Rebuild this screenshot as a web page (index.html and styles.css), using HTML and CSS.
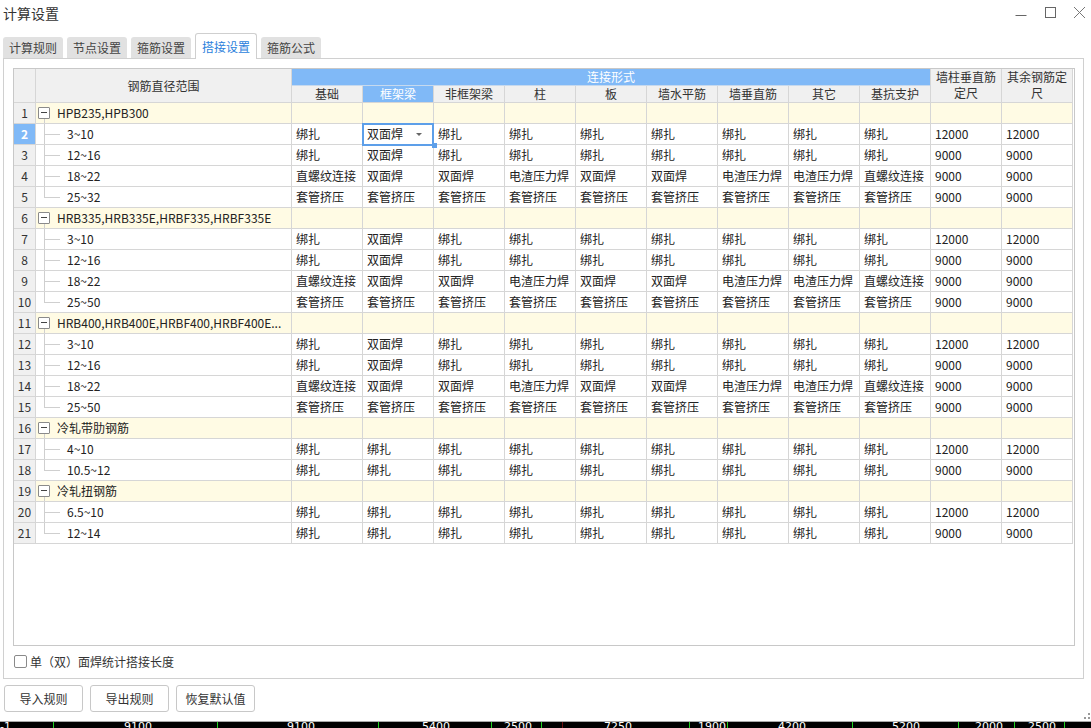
FILE: index.html
```html
<!DOCTYPE html>
<html lang="zh-CN">
<head>
<meta charset="utf-8">
<title>计算设置</title>
<link rel="stylesheet" href="styles.css">
</head>
<body>
<div class="window">
  <div class="titlebar">
    <div class="title">计算设置</div>
    <div class="controls">
      <svg class="ctl" width="12" height="12" viewBox="0 0 12 12"><line x1="0.5" y1="9.5" x2="11.5" y2="9.5" stroke="#666" stroke-width="1"/></svg>
      <svg class="ctl" width="12" height="12" viewBox="0 0 12 12"><rect x="1.5" y="1.5" width="10" height="10" fill="none" stroke="#666" stroke-width="1"/></svg>
      <svg class="ctl" width="12" height="12" viewBox="0 0 12 12"><path d="M1 1 L12 12 M12 1 L1 12" stroke="#777" stroke-width="1" fill="none"/></svg>
    </div>
  </div>

  <div class="tabs">
    <div class="tab">计算规则</div>
    <div class="tab">节点设置</div>
    <div class="tab">箍筋设置</div>
    <div class="tab active">搭接设置</div>
    <div class="tab">箍筋公式</div>
  </div>

  <div class="panel">
    <div class="gridbox">
      <div class="grid">
        <div class="h hn"></div>
        <div class="h hname">钢筋直径范围</div>
        <div class="h hblue">连接形式</div>
        <div class="h hw">墙柱垂直筋定尺</div>
        <div class="h hw">其余钢筋定尺</div>
        <div class="h">基础</div>
        <div class="h hsel">框架梁</div>
        <div class="h">非框架梁</div>
        <div class="h">柱</div>
        <div class="h">板</div>
        <div class="h">墙水平筋</div>
        <div class="h">墙垂直筋</div>
        <div class="h">其它</div>
        <div class="h">基抗支护</div>

        <!-- group 1 -->
        <div class="r g"><div class="n">1</div><div class="nm"><span class="box"></span>HPB235,HPB300</div><div></div><div></div><div></div><div></div><div></div><div></div><div></div><div></div><div></div><div></div><div></div></div>
        <div class="r"><div class="n sel">2</div><div class="nm ch">3~10</div><div class="c">绑扎</div><div class="c selc">双面焊<span class="dd"></span></div><div class="c">绑扎</div><div class="c">绑扎</div><div class="c">绑扎</div><div class="c">绑扎</div><div class="c">绑扎</div><div class="c">绑扎</div><div class="c">绑扎</div><div class="c">12000</div><div class="c">12000</div></div>
        <div class="r"><div class="n">3</div><div class="nm ch">12~16</div><div class="c">绑扎</div><div class="c">双面焊</div><div class="c">绑扎</div><div class="c">绑扎</div><div class="c">绑扎</div><div class="c">绑扎</div><div class="c">绑扎</div><div class="c">绑扎</div><div class="c">绑扎</div><div class="c">9000</div><div class="c">9000</div></div>
        <div class="r"><div class="n">4</div><div class="nm ch">18~22</div><div class="c">直螺纹连接</div><div class="c">双面焊</div><div class="c">双面焊</div><div class="c">电渣压力焊</div><div class="c">双面焊</div><div class="c">双面焊</div><div class="c">电渣压力焊</div><div class="c">电渣压力焊</div><div class="c">直螺纹连接</div><div class="c">9000</div><div class="c">9000</div></div>
        <div class="r"><div class="n">5</div><div class="nm ch last">25~32</div><div class="c">套管挤压</div><div class="c">套管挤压</div><div class="c">套管挤压</div><div class="c">套管挤压</div><div class="c">套管挤压</div><div class="c">套管挤压</div><div class="c">套管挤压</div><div class="c">套管挤压</div><div class="c">套管挤压</div><div class="c">9000</div><div class="c">9000</div></div>

        <!-- group 2 -->
        <div class="r g"><div class="n">6</div><div class="nm"><span class="box"></span>HRB335,HRB335E,HRBF335,HRBF335E</div><div></div><div></div><div></div><div></div><div></div><div></div><div></div><div></div><div></div><div></div><div></div></div>
        <div class="r"><div class="n">7</div><div class="nm ch">3~10</div><div class="c">绑扎</div><div class="c">双面焊</div><div class="c">绑扎</div><div class="c">绑扎</div><div class="c">绑扎</div><div class="c">绑扎</div><div class="c">绑扎</div><div class="c">绑扎</div><div class="c">绑扎</div><div class="c">12000</div><div class="c">12000</div></div>
        <div class="r"><div class="n">8</div><div class="nm ch">12~16</div><div class="c">绑扎</div><div class="c">双面焊</div><div class="c">绑扎</div><div class="c">绑扎</div><div class="c">绑扎</div><div class="c">绑扎</div><div class="c">绑扎</div><div class="c">绑扎</div><div class="c">绑扎</div><div class="c">9000</div><div class="c">9000</div></div>
        <div class="r"><div class="n">9</div><div class="nm ch">18~22</div><div class="c">直螺纹连接</div><div class="c">双面焊</div><div class="c">双面焊</div><div class="c">电渣压力焊</div><div class="c">双面焊</div><div class="c">双面焊</div><div class="c">电渣压力焊</div><div class="c">电渣压力焊</div><div class="c">直螺纹连接</div><div class="c">9000</div><div class="c">9000</div></div>
        <div class="r"><div class="n">10</div><div class="nm ch last">25~50</div><div class="c">套管挤压</div><div class="c">套管挤压</div><div class="c">套管挤压</div><div class="c">套管挤压</div><div class="c">套管挤压</div><div class="c">套管挤压</div><div class="c">套管挤压</div><div class="c">套管挤压</div><div class="c">套管挤压</div><div class="c">9000</div><div class="c">9000</div></div>

        <!-- group 3 -->
        <div class="r g"><div class="n">11</div><div class="nm"><span class="box"></span>HRB400,HRB400E,HRBF400,HRBF400E...</div><div></div><div></div><div></div><div></div><div></div><div></div><div></div><div></div><div></div><div></div><div></div></div>
        <div class="r"><div class="n">12</div><div class="nm ch">3~10</div><div class="c">绑扎</div><div class="c">双面焊</div><div class="c">绑扎</div><div class="c">绑扎</div><div class="c">绑扎</div><div class="c">绑扎</div><div class="c">绑扎</div><div class="c">绑扎</div><div class="c">绑扎</div><div class="c">12000</div><div class="c">12000</div></div>
        <div class="r"><div class="n">13</div><div class="nm ch">12~16</div><div class="c">绑扎</div><div class="c">双面焊</div><div class="c">绑扎</div><div class="c">绑扎</div><div class="c">绑扎</div><div class="c">绑扎</div><div class="c">绑扎</div><div class="c">绑扎</div><div class="c">绑扎</div><div class="c">9000</div><div class="c">9000</div></div>
        <div class="r"><div class="n">14</div><div class="nm ch">18~22</div><div class="c">直螺纹连接</div><div class="c">双面焊</div><div class="c">双面焊</div><div class="c">电渣压力焊</div><div class="c">双面焊</div><div class="c">双面焊</div><div class="c">电渣压力焊</div><div class="c">电渣压力焊</div><div class="c">直螺纹连接</div><div class="c">9000</div><div class="c">9000</div></div>
        <div class="r"><div class="n">15</div><div class="nm ch last">25~50</div><div class="c">套管挤压</div><div class="c">套管挤压</div><div class="c">套管挤压</div><div class="c">套管挤压</div><div class="c">套管挤压</div><div class="c">套管挤压</div><div class="c">套管挤压</div><div class="c">套管挤压</div><div class="c">套管挤压</div><div class="c">9000</div><div class="c">9000</div></div>

        <!-- group 4 -->
        <div class="r g"><div class="n">16</div><div class="nm"><span class="box"></span>冷轧带肋钢筋</div><div></div><div></div><div></div><div></div><div></div><div></div><div></div><div></div><div></div><div></div><div></div></div>
        <div class="r"><div class="n">17</div><div class="nm ch">4~10</div><div class="c">绑扎</div><div class="c">绑扎</div><div class="c">绑扎</div><div class="c">绑扎</div><div class="c">绑扎</div><div class="c">绑扎</div><div class="c">绑扎</div><div class="c">绑扎</div><div class="c">绑扎</div><div class="c">12000</div><div class="c">12000</div></div>
        <div class="r"><div class="n">18</div><div class="nm ch last">10.5~12</div><div class="c">绑扎</div><div class="c">绑扎</div><div class="c">绑扎</div><div class="c">绑扎</div><div class="c">绑扎</div><div class="c">绑扎</div><div class="c">绑扎</div><div class="c">绑扎</div><div class="c">绑扎</div><div class="c">9000</div><div class="c">9000</div></div>

        <!-- group 5 -->
        <div class="r g"><div class="n">19</div><div class="nm"><span class="box"></span>冷轧扭钢筋</div><div></div><div></div><div></div><div></div><div></div><div></div><div></div><div></div><div></div><div></div><div></div></div>
        <div class="r"><div class="n">20</div><div class="nm ch">6.5~10</div><div class="c">绑扎</div><div class="c">绑扎</div><div class="c">绑扎</div><div class="c">绑扎</div><div class="c">绑扎</div><div class="c">绑扎</div><div class="c">绑扎</div><div class="c">绑扎</div><div class="c">绑扎</div><div class="c">12000</div><div class="c">12000</div></div>
        <div class="r"><div class="n">21</div><div class="nm ch last">12~14</div><div class="c">绑扎</div><div class="c">绑扎</div><div class="c">绑扎</div><div class="c">绑扎</div><div class="c">绑扎</div><div class="c">绑扎</div><div class="c">绑扎</div><div class="c">绑扎</div><div class="c">绑扎</div><div class="c">9000</div><div class="c">9000</div></div>
      </div>
    </div>

    <label class="check"><span class="cbox"></span>单（双）面焊统计搭接长度</label>
  </div>

  <div class="buttons">
    <div class="btn">导入规则</div>
    <div class="btn">导出规则</div>
    <div class="btn">恢复默认值</div>
  </div>

  <div class="spacer"></div>

  <div class="ruler">
    <span class="lbl l0">-1</span>
    <span class="tick" style="left:53px"></span>
    <span class="lbl" style="left:124px">9100</span>
    <span class="tick" style="left:217px"></span>
    <span class="lbl" style="left:287px">9100</span>
    <span class="tick" style="left:378px"></span>
    <span class="lbl" style="left:422px">5400</span>
    <span class="tick" style="left:491px"></span>
    <span class="lbl" style="left:504px">2500</span>
    <span class="tick" style="left:541px"></span>
    <span class="tick red" style="left:562px"></span>
    <span class="lbl" style="left:604px">7250</span>
    <span class="tick" style="left:689px"></span>
    <span class="lbl" style="left:698px">1900</span>
    <span class="tick" style="left:727px"></span>
    <span class="lbl" style="left:778px">4200</span>
    <span class="tick" style="left:852px"></span>
    <span class="lbl" style="left:892px">5200</span>
    <span class="tick" style="left:958px"></span>
    <span class="lbl" style="left:975px">2000</span>
    <span class="tick" style="left:1014px"></span>
    <span class="lbl" style="left:1028px">2500</span>
    <span class="tick" style="left:1064px"></span>
  </div>

  <svg class="grip" width="6" height="6" viewBox="0 0 6 6"><rect x="4" y="0" width="2" height="2" fill="#999"/><rect x="0" y="4" width="2" height="2" fill="#999"/><rect x="4" y="4" width="2" height="2" fill="#999"/></svg>
</div>
</body>
</html>
```

FILE: styles.css
```css
html, body {
  margin: 0;
  padding: 0;
}

body {
  width: 1091px;
  height: 728px;
  overflow: hidden;
  background: #fff;
  color: #333;
  font-family: "Noto Sans CJK SC", "Noto Sans", "Liberation Sans", sans-serif;
  font-size: 12px;
}

.window {
  position: relative;
  display: flex;
  flex-direction: column;
  height: 728px;
}

/* title bar */
.titlebar {
  height: 33px;
  display: flex;
  justify-content: space-between;
  align-items: flex-start;
  flex: none;
}

.title {
  font-size: 14px;
  line-height: 18px;
  padding: 4px 0 0 3px;
  color: #333;
}

.controls {
  display: flex;
  gap: 17px;
  padding-top: 6px;
  margin-right: 6px;
}

.ctl {
  display: block;
}

/* tabs */
.tabs {
  height: 25px;
  display: flex;
  align-items: flex-end;
  gap: 4px;
  padding-left: 3px;
  flex: none;
  position: relative;
  z-index: 2;
}

.tab {
  height: 21px;
  line-height: 21px;
  padding: 0 6px;
  background: #e1e1e1;
  color: #444;
  border-radius: 3px 3px 0 0;
  box-sizing: border-box;
}

.tab.active {
  height: 26px;
  padding-top: 1px;
  background: #fff;
  color: #2b7fdc;
  border: 1px solid #cfcfcf;
  border-bottom: none;
  margin-bottom: -1px;
  line-height: 24px;
}

/* panel */
.panel {
  margin-left: 3px;
  width: 1081px;
  height: 621px;
  box-sizing: border-box;
  border: 1px solid #d0d0d0;
  padding: 9px 8px 0 9px;
  flex: none;
}

.gridbox {
  width: 1062px;
  height: 578px;
  box-sizing: border-box;
  border: 1px solid #c8c8c8;
  background: #fff;
}

.grid {
  display: grid;
  grid-template-columns: 22px 256px repeat(11, 71px);
  grid-template-rows: 17px 17px;
  grid-auto-rows: 21px;
}

.r {
  display: contents;
}

.grid > div,
.r > div {
  box-sizing: border-box;
  border-right: 1px solid #d6d6d6;
  border-bottom: 1px solid #d6d6d6;
  white-space: nowrap;
}

/* header */
.h {
  background: #f0f0f0;
  text-align: center;
  line-height: 16px;
  color: #333;
}

.hn,
.hname,
.hw {
  grid-row: span 2;
}

.hname {
  line-height: 33px;
}

.grid > .hw {
  white-space: normal;
  padding: 0 4px;
  line-height: 16px;
}

.grid > .hblue {
  grid-column: span 9;
  background: #80b9f7;
  color: #fff;
  border-bottom-color: #c6d9ee;
}

.hsel {
  background: #80b9f7;
  color: #fff;
}

/* body cells */
.n {
  background: #f0f0f0;
  text-align: center;
  line-height: 20px;
  color: #333;
}

.n.sel {
  background: #80b9f7;
  color: #fff;
  font-weight: bold;
}

.c {
  line-height: 20px;
  padding-left: 4px;
  color: #222;
}

.g > div:not(.n) {
  background: #fffbe4;
}

.nm {
  position: relative;
  line-height: 20px;
  color: #222;
}

.ch {
  padding-left: 31px;
}

.ch::before {
  content: "";
  position: absolute;
  left: 8px;
  top: 0;
  bottom: 0;
  width: 1px;
  background: #cfcfcf;
}

.ch.last::before {
  bottom: auto;
  height: 10px;
}

.ch::after {
  content: "";
  position: absolute;
  left: 8px;
  top: 10px;
  width: 16px;
  height: 1px;
  background: #cfcfcf;
}

.g .nm {
  display: flex;
  align-items: center;
  padding-left: 2px;
}

.g .nm::after {
  content: "";
  position: absolute;
  left: 8px;
  top: 16px;
  bottom: 0;
  width: 1px;
  background: #cfcfcf;
}

.box {
  position: relative;
  width: 12px;
  height: 12px;
  box-sizing: border-box;
  border: 1px solid #8a8a8a;
  border-radius: 1px;
  background: #fff;
  margin-right: 7px;
  flex: none;
}

.box::before {
  content: "";
  position: absolute;
  left: 2px;
  top: 4px;
  width: 6px;
  height: 1px;
  background: #444;
}

/* selected cell */
.c.selc {
  position: relative;
  z-index: 1;
}

.selc::before {
  content: "";
  position: absolute;
  left: -1px;
  top: -1px;
  right: -1px;
  bottom: -2px;
  border: 2px solid #5d9fe9;
}

.selc::after {
  content: "";
  position: absolute;
  right: -4px;
  bottom: -4px;
  width: 5px;
  height: 5px;
  background: #5d9fe9;
}

.dd {
  position: absolute;
  right: 11px;
  top: 9px;
  width: 0;
  height: 0;
  border-left: 3px solid transparent;
  border-right: 3px solid transparent;
  border-top: 3px solid #666;
}

/* checkbox row */
.check {
  display: flex;
  align-items: center;
  gap: 3px;
  margin-top: 9px;
  height: 13px;
  line-height: 13px;
  font-size: 12px;
  color: #333;
}

.cbox {
  width: 13px;
  height: 13px;
  box-sizing: border-box;
  border: 1px solid #8a8a8a;
  border-radius: 2px;
  margin-left: 1px;
  background: #fff;
}

/* buttons */
.buttons {
  display: flex;
  gap: 7px;
  margin: 6px 0 0 4px;
  flex: none;
}

.btn {
  width: 79px;
  height: 27px;
  box-sizing: border-box;
  border: 1px solid #c8c8c8;
  border-radius: 3px;
  background: #fff;
  text-align: center;
  line-height: 25px;
  color: #333;
}

.spacer {
  flex: 1;
}

/* bottom ruler strip */
.ruler {
  position: relative;
  flex: none;
  height: 6px;
  background: #000;
  border-top: 1px solid #a8a8a8;
  overflow: hidden;
}

.lbl {
  position: absolute;
  top: -1px;
  font-family: "DejaVu Sans", sans-serif;
  font-size: 11px;
  line-height: 12px;
  color: #fff;
}

.l0 {
  left: 0;
}

.tick {
  position: absolute;
  top: 0;
  width: 1px;
  height: 6px;
  background: #1fd11f;
}

.tick.red {
  background: #6b1010;
}

.grip {
  position: absolute;
  right: 1px;
  bottom: 9px;
}
```
